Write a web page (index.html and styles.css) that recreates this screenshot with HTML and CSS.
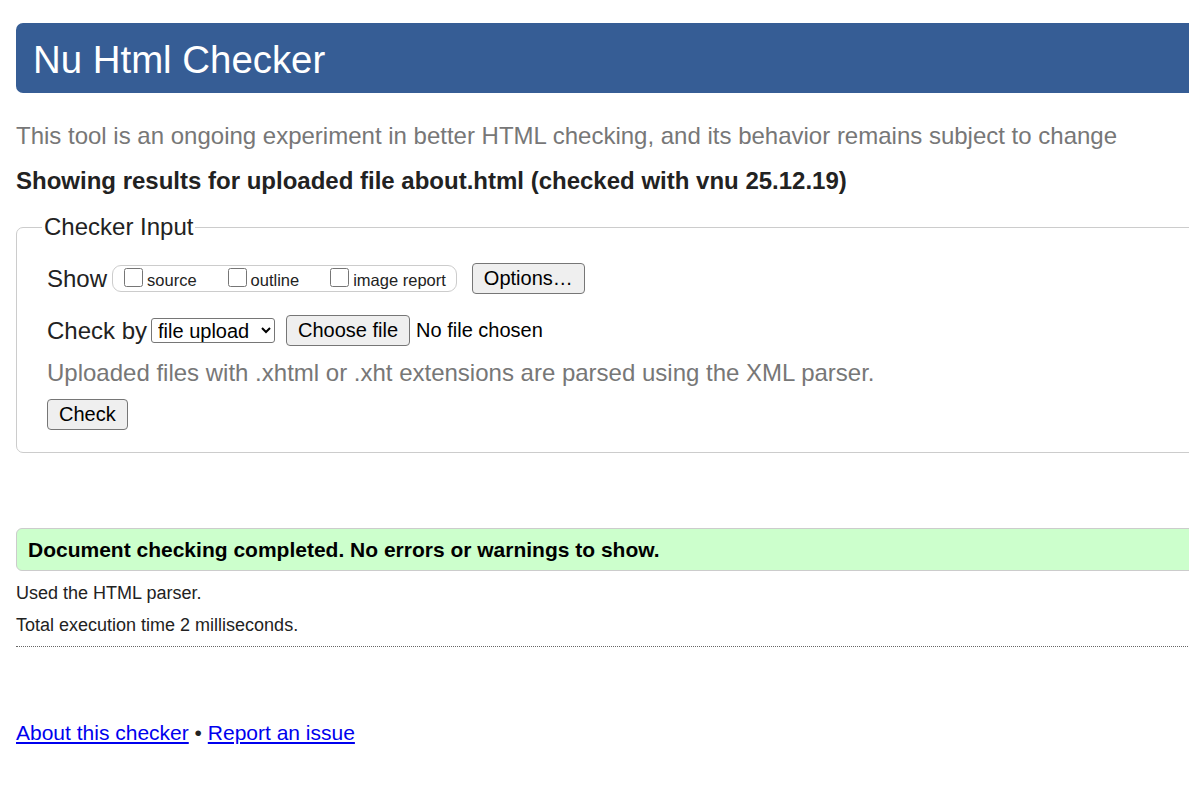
FILE: index.html
```html
<!DOCTYPE html>
<html lang="en">

<head>
    <meta charset="utf-8">
    <title>Showing results for about.html - Nu Html Checker</title>
    <link rel="stylesheet" href="styles.css">
</head>

<body>
    <div class="page">
        <h1 class="title">Nu Html Checker</h1>
        <p class="tagline">This tool is an ongoing experiment in better HTML checking, and its behavior remains subject to change</p>
        <p class="results-for">Showing results for uploaded file about.html (checked with vnu 25.12.19)</p>

        <form class="checker">
            <fieldset class="checker-input">
                <legend>Checker Input</legend>

                <div class="row">
                    <span class="row-label">Show</span>
                    <span class="show-group">
                        <label class="opt"><input type="checkbox" name="showsource"> source</label>
                        <label class="opt"><input type="checkbox" name="showoutline"> outline</label>
                        <label class="opt"><input type="checkbox" name="showimagereport"> image report</label>
                    </span>
                    <button type="button" class="btn">Options…</button>
                </div>

                <div class="row">
                    <span class="row-label">Check by</span>
                    <select class="check-by">
                        <option>address</option>
                        <option selected>file upload</option>
                        <option>text input</option>
                    </select>
                    <label class="btn file-btn">Choose file<input type="file" name="file" hidden></label>
                    <span class="file-name">No file chosen</span>
                </div>

                <p class="hint">Uploaded files with .xhtml or .xht extensions are parsed using the XML parser.</p>

                <button type="submit" class="btn">Check</button>
            </fieldset>
        </form>

        <p class="success">Document checking completed. No errors or warnings to show.</p>
        <p class="stats">Used the HTML parser.</p>
        <p class="stats">Total execution time 2 milliseconds.</p>
        <hr class="rule">

        <p class="footer"><a href="#">About this checker</a> • <a href="#">Report an issue</a></p>
    </div>
</body>

</html>
```

FILE: styles.css
```css
/* page is wider than the window, right side is cut off */

body {
    margin: 0;
    overflow-x: hidden;
    background: #fff;
    color: #222;
    font-family: "Liberation Sans", Arial, sans-serif;
    font-size: 24px;
}

.page {
    width: 1240px;
    padding: 23px 0 0 16px;
}

.title {
    box-sizing: border-box;
    margin: 0;
    height: 70px;
    padding: 4px 0 0 17px;
    background-color: #365d95;
    border-radius: 7px;
    color: #fff;
    font-size: 38.4px;
    font-weight: normal;
    line-height: 66px;
}

.tagline {
    margin: 29px 0 0;
    line-height: 28px;
    color: #777;
}

.results-for {
    margin: 17px 0 0;
    line-height: 28px;
    font-weight: bold;
}

/* checker form */

.checker-input {
    margin: 18px 0 0;
    padding: 22px 30px 22px;
    border: 1px solid #ccc;
    border-radius: 7px;
}

.checker-input legend {
    margin-left: -5px;
    padding: 0 2px;
    line-height: 28px;
}

.row {
    display: flex;
    align-items: center;
    margin-bottom: 21px;
}

.show-group {
    display: flex;
    align-items: center;
    height: 25px;
    margin: 0 15px 0 5px;
    padding: 0 10px 0 5px;
    border: 1px solid #ccc;
    border-radius: 9px;
    font-size: 16.5px;
}

.opt {
    display: flex;
    align-items: flex-end;
    margin-right: 25px;
}

.opt:last-child {
    margin-right: 0;
}

.opt input {
    width: 19px;
    height: 19px;
    margin: 0 4px 3px 6px;
}

.btn {
    display: inline-block;
    padding: 3px 11px;
    border: 1px solid #767676;
    border-radius: 4px;
    background-color: #efefef;
    color: #000;
    font-family: inherit;
    font-size: 20px;
    line-height: 23px;
}

.check-by {
    width: 124px;
    height: 25px;
    margin: 0 11px 0 4px;
    padding: 0 0 0 2px;
    border: 1px solid #767676;
    border-radius: 3px;
    background: #fff;
    color: #000;
    font-family: inherit;
    font-size: 20px;
}

.file-name {
    margin-left: 6px;
    font-size: 20px;
    color: #000;
}

.hint {
    margin: -8px 0 12px;
    line-height: 28px;
    color: #777;
}

/* results */

.success {
    margin: 75px 0 0;
    padding: 0 11px;
    height: 41px;
    line-height: 41px;
    border: 1px solid #ccc;
    border-radius: 6px;
    background-color: #ccffcc;
    color: #000;
    font-size: 21px;
    font-weight: bold;
}

.stats {
    margin: 11px 0 0;
    line-height: 22px;
    font-size: 18px;
}

.stats + .stats {
    margin-top: 10px;
}

.rule {
    margin: 10px 0 0;
    border: 0;
    border-top: 1px dotted #666;
}

.footer {
    margin: 74px 0 0;
    font-size: 21px;
}

.footer a {
    color: #00e;
}
```
